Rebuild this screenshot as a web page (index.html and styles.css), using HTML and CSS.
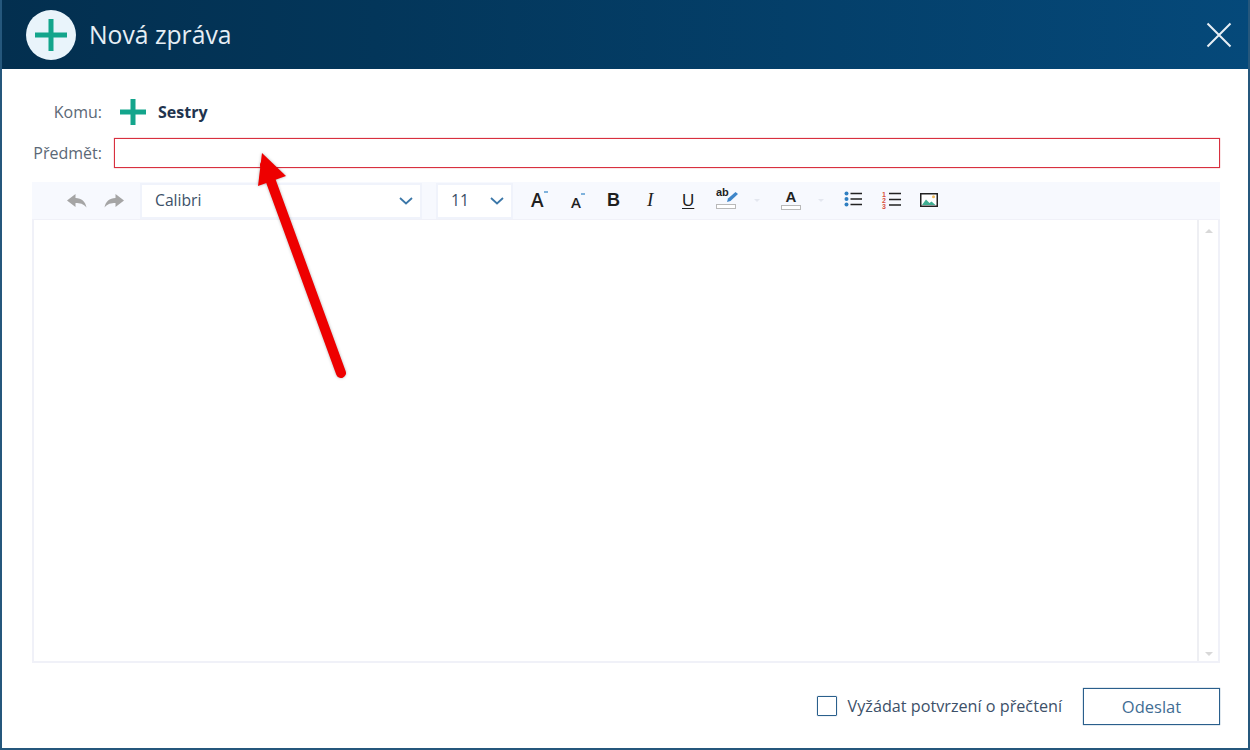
FILE: index.html
```html
<!DOCTYPE html>
<html lang="cs">
<head>
<meta charset="utf-8">
<title>Nová zpráva</title>
<link rel="stylesheet" href="styles.css">
</head>
<body>
<div class="dialog">
  <header class="head">
    <div class="head-badge">
      <svg width="34" height="34" viewBox="0 0 34 34"><path class="plus" d="M14.500 1h5v13.500H33v5H19.500V33h-5V19.500H1v-5h13.500z"/></svg>
    </div>
    <h1 class="head-title">Nová zpráva</h1>
    <svg class="close" width="26" height="26" viewBox="0 0 26 26"><path d="M1.500 1.500l23 23M24.500 1.500l-23 23"/></svg>
  </header>
  <main class="content">
    <div class="row row-to">
      <span class="label">Komu:</span>
      <svg class="to-icon" width="26" height="26" viewBox="0 0 26 26"><path class="plus" d="M10.500 0h5v10.500H26v5H15.500V26h-5V15.500H0v-5h10.500z"/></svg>
      <b class="to-name">Sestry</b>
    </div>
    <div class="row row-subject">
      <span class="label">Předmět:</span>
      <div class="subject"></div>
    </div>
    <div class="toolbar">
      <svg class="tb-ic tb-undo" width="22" height="16" viewBox="0 0 22 16"><path d="M9.500 1L1 7.500l8.500 6.500v-4c4.500 0 8 .8 11 4.500C19.500 8.500 15.500 5.200 9.500 5z"/></svg>
      <svg class="tb-ic tb-redo" width="22" height="16" viewBox="0 0 22 16"><path d="M12.500 1L21 7.500 12.500 14v-4c-4.500 0-8 .8-11 4.500C2.500 8.500 6.500 5.200 12.500 5z"/></svg>
      <div class="select select-font"><span>Calibri</span><svg width="14" height="8" viewBox="0 0 14 8"><path d="M1 1l6 5.500L13 1"/></svg></div>
      <div class="select select-size"><span>11</span><svg width="14" height="8" viewBox="0 0 14 8"><path d="M1 1l6 5.500L13 1"/></svg></div>
      <div class="tools">
        <span class="tool t-grow">A<i class="dash"></i></span>
        <span class="tool t-shrink">A<i class="dash"></i></span>
        <span class="tool t-b">B</span>
        <span class="tool t-i">I</span>
        <span class="tool t-u">U</span>
        <span class="tool t-hl">ab<svg class="pen" width="11" height="10" viewBox="0 0 11 10"><path d="M8.500 0L11 2 3.500 9 0 10l1-3.500z"/></svg><i class="swatch"></i></span>
        <i class="caret c1"></i>
        <span class="tool t-color">A<i class="swatch"></i></span>
        <i class="caret c2"></i>
        <svg class="t-svg t-ul" width="18" height="16" viewBox="0 0 18 16"><circle class="bl" cx="2.500" cy="2.500" r="2"/><circle class="bl" cx="2.500" cy="8" r="2"/><circle class="bl" cx="2.500" cy="13.500" r="2"/><path class="ln" d="M6.500 2.500H18M6.500 8H18M6.500 13.500H18"/></svg>
        <span class="t-ol"><span class="nums"><span>1</span><span>2</span><span>3</span></span><svg width="12" height="16" viewBox="0 0 12 16"><path class="ln" d="M0 2.500h12M0 8.500h12M0 14h12"/></svg></span>
        <svg class="t-svg t-img" width="18" height="16" viewBox="0 0 18 16"><rect x=".75" y="1.750" width="16.500" height="12.500" fill="#fff" stroke="#222" stroke-width="1.500"/><circle cx="13.500" cy="4.800" r="1.500" fill="#f0b95a"/><path d="M2 13l4-5.500 3.500 3.500 2-1.500 4 3.500z" fill="#3fae92"/></svg>
      </div>
    </div>
    <div class="editor">
      <div class="scroll"><i class="arr arr-up"></i><i class="arr arr-down"></i></div>
    </div>
    <footer class="foot">
      <label class="check"><i class="box"></i><span>Vyžádat potvrzení o přečtení</span></label>
      <button class="send" type="button">Odeslat</button>
    </footer>
  </main>
  <svg class="arrow" width="120" height="250" viewBox="0 0 120 250"><path class="shaft" d="M25 25L101 233"/><path class="tip" d="M22 13L46 36 18 46z"/></svg>
</div>
</body>
</html>
```
FILE: styles.css
```css
* { box-sizing: border-box; }
html, body { margin: 0; height: 100%; }
body { background: #fff; font-family: "Open Sans", "Noto Sans", sans-serif; color: #4a5a6c; }
.dialog { position: relative; width: 1250px; height: 750px; display: flex; flex-direction: column; border: 2px solid #25577c; border-top: 0; overflow: hidden; }
.head { height: 69px; margin: 0 -2px; flex: none; display: flex; align-items: center; padding: 0 18px 0 26px; background: linear-gradient(90deg, #032f4f 0%, #03365a 30%, #05497a 100%); }
.head-badge { width: 50px; height: 50px; border-radius: 50%; background: #e9f4fb; display: flex; align-items: center; justify-content: center; }
.plus { fill: #13a58c; }
.head-title { margin: 0 0 0 13px; font-size: 24.700px; font-weight: 400; color: #e6eef5; line-height: 32px; flex: 1; }
.close { fill: none; stroke: #e8eff5; stroke-width: 2; }
.content { flex: 1; display: flex; flex-direction: column; padding: 0 28px 0 30px; }
.row { display: flex; align-items: center; }
.label { width: 70px; text-align: right; font-size: 16px; color: #5b6876; }
.row-to { height: 40px; margin-top: 23px; }
.to-icon { margin-left: 18px; }
.to-name { margin-left: 12px; font-size: 16px; font-weight: 700; color: #22344e; }
.row-subject { height: 30px; margin-top: 6px; }
.subject { margin-left: 12px; flex: 1; height: 30px; border: 1px solid #d8303f; box-shadow: 0 0 1px rgba(216, 48, 63, .7); }
.toolbar { position: relative; margin-top: 14px; height: 37px; display: flex; align-items: center; background: #f7f9fe; padding-left: 34px; }
.tb-ic { fill: #a5a5a5; flex: none; }
.tb-redo { margin-left: 15px; }
.select { height: 36px; background: #fff; border: 2px solid #f0f3fb; display: flex; align-items: center; justify-content: space-between; font-size: 15.700px; color: #3b5068; flex: none; padding-bottom: 2px; }
.select svg { fill: none; stroke: #3b77a8; stroke-width: 1.800; margin-top: 2px; }
.select-font { width: 282px; margin-left: 15px; padding-left: 13px; padding-right: 7px; }
.select-size { width: 77px; margin-left: 14px; padding-left: 13px; padding-right: 7px; }
.tools { position: relative; flex: 1; height: 37px; display: flex; align-items: center; }
.tool { position: absolute; top: 6px; line-height: 24px; font-family: "Liberation Sans", sans-serif; color: #1f1f1f; text-align: center; }
.t-grow { left: 18px; font-size: 19px; font-family: "Open Sans", sans-serif; font-weight: 600; }
.t-shrink { left: 58px; top: 8px; font-size: 15px; font-family: "Open Sans", sans-serif; font-weight: 600; }
.dash { position: absolute; top: 3px; right: -4px; width: 4px; height: 2px; background: #7fb2dc; }
.t-b { left: 94px; font-size: 18px; font-weight: 700; }
.t-i { left: 134px; font-size: 19px; font-style: italic; font-family: "Liberation Serif", serif; }
.t-u { left: 169px; top: 7px; font-size: 17px; text-decoration: underline; text-underline-offset: 2px; }
.t-hl { left: 203px; top: 3px; width: 22px; height: 30px; font-size: 11px; font-weight: 700; text-align: left; line-height: 15px; }
.pen { position: absolute; left: 11px; top: 7px; fill: #3f86c9; }
.swatch { position: absolute; left: 0; top: 19px; width: 20px; height: 5px; background: #fff; border: 1px solid #b9b9b9; }
.caret { position: absolute; top: 17px; width: 0; height: 0; border: 3px solid transparent; border-top-color: #e4e7ef; }
.c1 { left: 241px; }
.c2 { left: 305px; }
.t-color { left: 268px; top: 4px; width: 20px; height: 30px; font-size: 15px; font-weight: 700; line-height: 21px; }
.t-color .swatch { top: 19px; }
.t-svg { position: absolute; top: 9px; }
.bl { fill: #2f7fc1; }
.ln { stroke: #222; stroke-width: 1.500; fill: none; }
.t-ul { left: 331px; }
.t-ol { position: absolute; left: 369px; top: 9px; width: 19px; height: 18px; display: flex; justify-content: space-between; }
.nums { display: flex; flex-direction: column; font: 700 7px/6px "Liberation Sans", sans-serif; color: #d9503f; padding-top: 1px; }
.t-img { left: 407px; top: 10px; }
.editor { height: 444px; border: 2px solid #f0f1f8; border-top-width: 1px; display: flex; justify-content: flex-end; }
.scroll { position: relative; width: 21px; border-left: 2px solid #eeeff3; }
.arr { position: absolute; left: 6px; width: 0; height: 0; border: 4px solid transparent; }
.arr-up { top: 5px; border-bottom-color: #d8d8d8; }
.arr-down { bottom: 1px; border-top-color: #d8d8d8; }
.foot { flex: 1; display: flex; align-items: center; justify-content: flex-end; }
.check { display: flex; align-items: center; font-size: 16.200px; color: #3c5068; }
.box { width: 20px; height: 20px; border: 1px solid #2a5f8c; box-shadow: 0 0 1px rgba(42, 95, 140, .7); margin-right: 11px; border-radius: 1px; }
.send { margin: 2px 0 0 21px; width: 137px; height: 37px; background: #fff; border: 1px solid #2a5f8c; box-shadow: 0 0 1px rgba(42, 95, 140, .8); font: 16.500px "Open Sans", sans-serif; color: #3f6d94; padding: 0; }
.arrow { position: absolute; left: 238px; top: 140px; fill: none; filter: drop-shadow(0 0 1.500px rgba(0,0,0,.3)); }
.shaft { stroke: #ee0000; stroke-width: 10; stroke-linecap: round; }
.tip { fill: #ee0000; }
```
